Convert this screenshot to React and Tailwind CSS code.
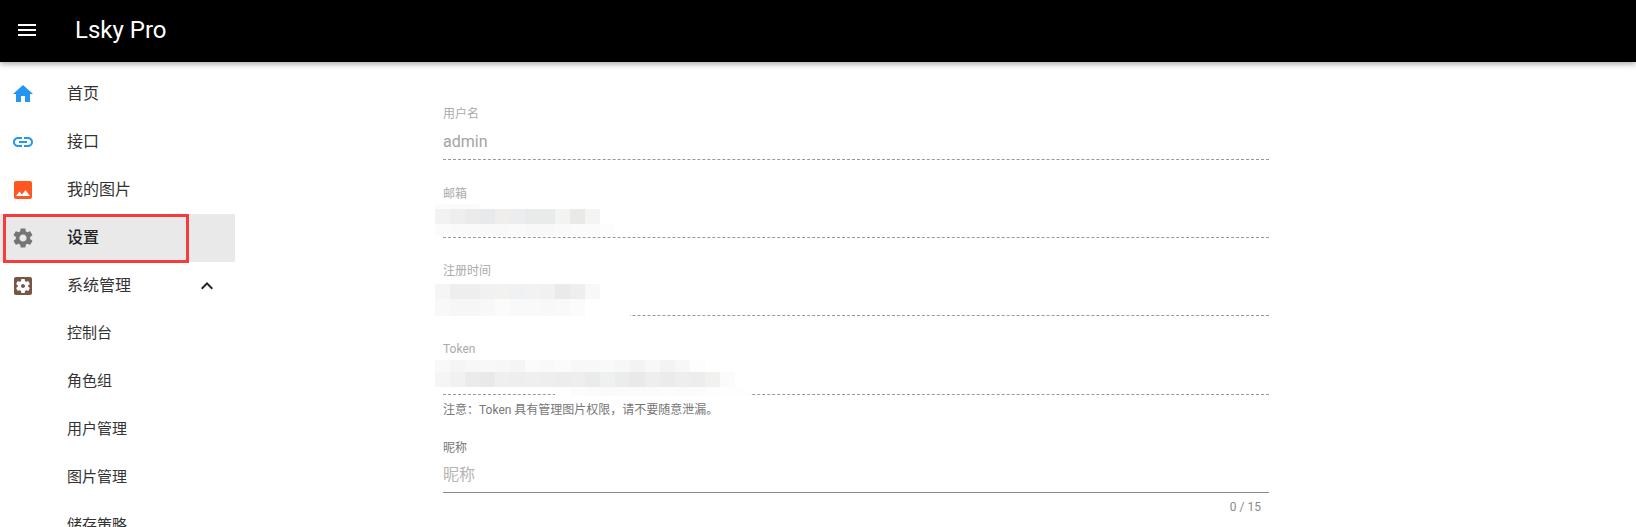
import React from "react";

const paths = {
  menu: "M3 18h18v-2H3v2zm0-5h18v-2H3v2zm0-7v2h18V6H3z",
  home: "M10 20v-6h4v6h5v-8h3L12 3 2 12h3v8z",
  link: "M3.9 12c0-1.71 1.39-3.1 3.1-3.1h4V7H7c-2.76 0-5 2.24-5 5s2.24 5 5 5h4v-1.9H7c-1.71 0-3.1-1.39-3.1-3.1zM8 13h8v-2H8v2zm9-6h-4v1.9h4c1.71 0 3.1 1.39 3.1 3.1s-1.39 3.1-3.1 3.1h-4V17h4c2.76 0 5-2.24 5-5s-2.24-5-5-5z",
  photo: "M21 19V5c0-1.1-.9-2-2-2H5c-1.1 0-2 .9-2 2v14c0 1.1.9 2 2 2h14c1.1 0 2-.9 2-2zM8.5 13.5l2.5 3.01L14.5 12l4.5 6H5l3.5-4.5z",
  settings: "M19.14 12.94c.04-.3.06-.61.06-.94 0-.32-.02-.64-.07-.94l2.03-1.58c.18-.14.23-.41.12-.61l-1.92-3.32c-.12-.22-.37-.29-.59-.22l-2.39.96c-.5-.38-1.03-.7-1.62-.94l-.36-2.54c-.04-.24-.24-.41-.48-.41h-3.84c-.24 0-.43.17-.47.41l-.36 2.54c-.59.24-1.13.57-1.62.94l-2.39-.96c-.22-.08-.47 0-.59.22L2.74 8.87c-.12.21-.08.47.12.61l2.03 1.58c-.05.3-.09.63-.09.94s.02.64.07.94l-2.03 1.58c-.18.14-.23.41-.12.61l1.92 3.32c.12.22.37.29.59.22l2.39-.96c.5.38 1.03.7 1.62.94l.36 2.54c.05.24.24.41.48.41h3.84c.24 0 .44-.17.47-.41l.36-2.54c.59-.24 1.13-.56 1.62-.94l2.39.96c.22.08.47 0 .59-.22l1.92-3.32c.12-.22.07-.47-.12-.61l-2.01-1.58zM12 15.6c-1.98 0-3.6-1.62-3.6-3.6s1.62-3.6 3.6-3.6 3.6 1.62 3.6 3.6-1.62 3.6-3.6 3.6z",
  apps: "M12 10c-1.1 0-2 .9-2 2s.9 2 2 2 2-.9 2-2-.9-2-2-2zm7-7H5c-1.11 0-2 .9-2 2v14c0 1.1.89 2 2 2h14c1.11 0 2-.9 2-2V5c0-1.1-.89-2-2-2zm-1.75 9c0 .23-.02.46-.05.68l1.48 1.16c.13.11.17.3.08.45l-1.4 2.42c-.09.15-.27.21-.43.15l-1.74-.7c-.36.28-.76.51-1.18.69l-.26 1.85c-.03.17-.18.3-.35.3h-2.8c-.17 0-.32-.13-.35-.29l-.26-1.85c-.43-.18-.82-.41-1.18-.69l-1.74.7c-.16.06-.34 0-.43-.15l-1.4-2.42c-.09-.15-.05-.34.08-.45l1.48-1.16c-.03-.23-.05-.46-.05-.69 0-.23.02-.46.05-.68l-1.48-1.16c-.13-.11-.17-.3-.08-.45l1.4-2.42c.09-.15.27-.21.43-.15l1.74.7c.36-.28.76-.51 1.18-.69l.26-1.85c.03-.17.18-.3.35-.3h2.8c.17 0 .32.13.35.29l.26 1.85c.43.18.82.41 1.18.69l1.74-.7c.16-.06.34 0 .43.15l1.4 2.42c.09.15.05.34-.08.45l-1.48 1.16c.03.23.05.46.05.69z",
  up: "M12 8l-6 6 1.41 1.41L12 10.83l4.59 4.58L18 14z",
};

function Icon({ name, className }) {
  return (
    <svg viewBox="0 0 24 24" className={className} fill="currentColor">
      <path d={paths[name]} />
    </svg>
  );
}

const navItems = [
  { icon: "home", label: "首页", color: "text-[#2196f3]" },
  { icon: "link", label: "接口", color: "text-[#2196f3]" },
  { icon: "photo", label: "我的图片", color: "text-[#ff5722]" },
  { icon: "settings", label: "设置", color: "text-[#757575]", active: true },
  { icon: "apps", label: "系统管理", color: "text-[#795548]", open: true },
];

const subItems = ["控制台", "角色组", "用户管理", "图片管理", "储存策略"];

const none = "transparent";

// blurred-out values, every cell is 15px wide
const emailBlur = [
  [5, ["#fbfbfb", "#fafafa", "#fbfbfb"]],
  [15, ["#f2f2f2", "#eeeeee", "#ebebeb", "#e8e9eb", "#efeeed", "#ebedee", "#e9ebeb", "#e9ebeb", "#f3f3f2", "#e9e9e8", "#f3f4f4"]],
  [12, ["#fbfbfb", "#fafafa", "#fafafa", "#f9f9f9", "#f9f9f9", "#fafafa", "#f8f8f8", "#f8f8f8", "#fafafa", "#fbfbfb", "#fbfbfb", "#fdfdfd"]],
];

const dateBlur = [
  [15, ["#f5f5f5", "#eeeeee", "#eeeeee", "#f0f1f0", "#f2f2f0", "#eff1f2", "#f2f2f2", "#f1f1f1", "#e9eaec", "#eeeeee", "#f8f8f8"]],
  [17, ["#f8f8f8", "#f6f6f6", "#f6f6f6", "#f8f8f8", "#fbfbfb", "#f9f9f9", "#f9f9f9", "#f8f8f8", "#f9f9f9", "#fbfbfb", "#ffffff", "#ffffff", "#ffffff"]],
];

const tokenBlur = [
  [12, ["#f9f9f9", "#f5f5f5", "#f7f7f7", "#f8f8f8", "#f7f7f7", "#f5f5f5", "#fbfbf9", "#f9f9f9", "#fbfbfb", "#f9f8f7", "#f8f8f8", "#f8f9f9", "#f7f7f7", "#f2f3f3", "#f7f8f7", "#f3f3f4", "#f7f7f7", "#fdfdfd", "#ffffff"]],
  [15, ["#f5f5f5", "#f1f1f1", "#ebebeb", "#e9e9e9", "#efefef", "#eeeeee", "#efefef", "#eeeeee", "#ededed", "#eeeeee", "#eaecec", "#eff0f0", "#ebecec", "#e9e9e9", "#eeeeee", "#ebebeb", "#eeeeee", "#ededed", "#f1f1f0", "#fbfbfb"]],
  [9, [none, none, none, none, none, none, none, none, "#ffffff", "#fcfcfc", "#fbfbfb", "#fafafa", "#fbfbfb", "#fbfbfb", "#fbfbfb", "#fcfcfc", "#fbfbfb", "#fcfcfc", "#fdfdfd", "#fefefe", "#fefefe"]],
];

function Blur({ rows, className }) {
  return (
    <div className={`absolute left-[-8px] ${className}`}>
      {rows.map(([height, cells], r) => (
        <div key={r} className="flex" style={{ height }}>
          {cells.map((c, i) => (
            <div key={i} className="w-[15px]" style={{ background: c }} />
          ))}
        </div>
      ))}
    </div>
  );
}

function ReadonlyField({ label, value, className = "", labelTop = "", children }) {
  return (
    <div className={`relative flex h-[55px] flex-col ${className}`}>
      <div className={`text-xs leading-4 text-[#aaaaaa] ${labelTop}`}>{label}</div>
      <div className="flex flex-1 items-center border-b border-dashed border-[#999999] pt-[2px] text-base text-[#a3a3a3]">
        {value}
      </div>
      {children}
    </div>
  );
}

export default function App() {
  return (
    <div className="flex h-[527px] flex-col overflow-hidden bg-white font-['Roboto','Noto_Sans_CJK_SC',sans-serif]">
      <header className="relative z-10 flex h-[62px] shrink-0 items-center bg-black pb-[2px] text-white shadow-[0_2px_6px_rgba(0,0,0,0.35)]">
        <Icon name="menu" className="ml-[15px] h-6 w-6" />
        <span className="ml-9 text-2xl font-normal">Lsky Pro</span>
      </header>

      <div className="flex min-h-0 flex-1">
        <aside className="relative w-[235px] shrink-0 pt-2">
          {navItems.map((item) => (
            <div
              key={item.label}
              className={`flex h-12 items-center pl-[11px] text-base ${item.active ? "bg-[#e9e9e9] font-medium text-[#222222]" : "text-[#333333]"}`}
            >
              <Icon name={item.icon} className={`h-6 w-6 ${item.color}`} />
              <span className="ml-8">{item.label}</span>
              {item.open && <Icon name="up" className="ml-auto mr-4 h-6 w-6 text-[#222222]" />}
            </div>
          ))}
          {subItems.map((label) => (
            <div key={label} className="flex h-12 items-center pb-[2px] pl-[67px] text-[15px] text-[#333333]">
              {label}
            </div>
          ))}
          {/* red marker drawn over the active row */}
          <div className="absolute left-[3px] top-[152px] h-[49px] w-[186px] border-[3px] border-[#f53b3b]" />
        </aside>

        <main className="ml-[208px] w-[826px] shrink-0 pt-[43px]">
          <ReadonlyField label="用户名" value="admin" labelTop="pt-px" />
          <ReadonlyField label="邮箱" className="mt-[23px]" labelTop="pt-[3px]">
            <Blur rows={emailBlur} className="top-[21px]" />
          </ReadonlyField>
          <ReadonlyField label="注册时间" className="mt-[23px]" labelTop="pt-[2px]">
            <Blur rows={dateBlur} className="top-[23px]" />
          </ReadonlyField>
          <ReadonlyField label="Token" className="mt-[24px]" labelTop="pt-px">
            <Blur rows={tokenBlur} className="top-[20px]" />
          </ReadonlyField>
          <div className="mt-[7px] h-4 text-xs leading-4 text-[#777777]">注意：Token 具有管理图片权限，请不要随意泄漏。</div>
          <div className="mt-[22px] h-4 text-xs leading-4 text-[#777777]">昵称</div>
          <div className="flex h-[37px] items-center border-b border-[#8a8a8a] pt-[2px] text-base text-[#b5b5b5]">昵称</div>
          <div className="mt-[6px] pr-2 text-right text-xs leading-4 text-[#8a8a8a]">0 / 15</div>
        </main>
      </div>
    </div>
  );
}
